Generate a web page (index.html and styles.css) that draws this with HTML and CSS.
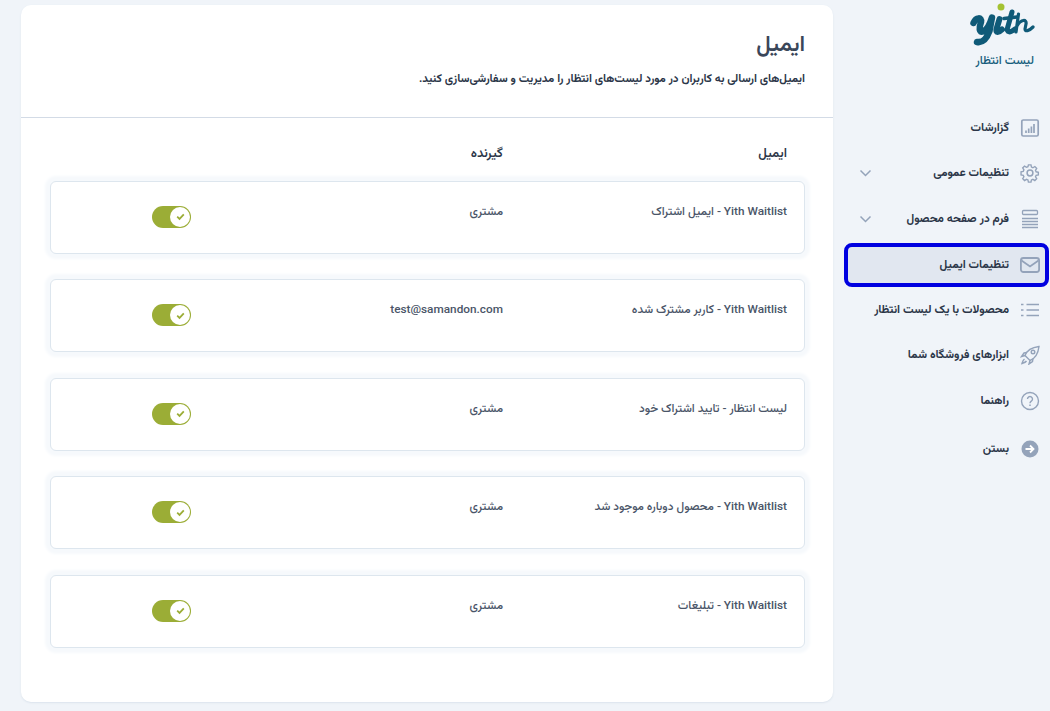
FILE: index.html
```html
<!DOCTYPE html>
<html lang="fa" dir="rtl">
<head>
<meta charset="utf-8">
<title>ایمیل</title>
<link rel="stylesheet" href="styles.css">
</head>
<body>
<div class="page">
  <aside class="sidebar">
    <div class="brand">
      <svg class="logo" viewBox="0 0 75 50" fill="none" stroke="#0f5a78" stroke-linecap="round" stroke-linejoin="round">
        <path stroke-width="6.500" d="M8.500 23C11 17 17 17 16 22 14 28 14 33 18 31.500 22 30 25 24 27 17.500L24.500 31C22 38 18 43 12 42"/>
        <path stroke-width="6" d="M34.500 19L31.500 29C30.500 33 33.500 33 37 29.500"/>
        <path stroke-width="5" d="M47 12L42.500 28C41.500 33 45 33 50 29"/>
        <path stroke-width="3.500" d="M39 18.500L52 17"/>
        <path stroke-width="3.200" d="M53.500 14L51 32M52 26C56 19 62 19 61 24L60 29C60 32 64 31 68 27"/>
        <circle cx="36" cy="7" r="3.500" fill="#a4c232" stroke="none"/>
      </svg>
      <div class="brand-name">لیست انتظار</div>
    </div>
    <nav class="nav">
      <a class="nav-item">
        <svg class="icon" viewBox="0 0 20 20"><rect x="1.800" y="2" width="16.400" height="16" rx="1.500" fill="none" stroke="#94a3ba" stroke-width="1.700"/><path d="M6 15v-2.500M8.700 15v-4.500M11.400 15V8.500M14 15V6" stroke="#94a3ba" stroke-width="1.700" fill="none"/></svg>
        <span class="label">گزارشات</span>
      </a>
      <a class="nav-item">
        <svg class="icon" viewBox="0 0 20 20" fill="none" stroke="#94a3ba" stroke-width="1.500"><circle cx="10" cy="10" r="2.900"/><path d="M8.600 1.500h2.800l.5 2.400 1.600.7 2.100-1.300 2 2-1.300 2.100.7 1.600 2.400.5v2.800l-2.400.5-.7 1.600 1.300 2.100-2 2-2.100-1.300-1.600.7-.5 2.400H8.600l-.5-2.400-1.600-.7-2.100 1.300-2-2 1.300-2.100-.7-1.600-2.400-.5V9l2.400-.5.7-1.600L2.400 4.800l2-2 2.100 1.300 1.600-.7z" transform="translate(.5 .5) scale(.92)"/></svg>
        <span class="label">تنظیمات عمومی</span>
        <svg class="chev" viewBox="0 0 12 8"><path d="M1 1.500l5 5 5-5" fill="none" stroke="#94a3ba" stroke-width="1.500"/></svg>
      </a>
      <a class="nav-item">
        <svg class="icon" viewBox="0 0 20 20" fill="none" stroke="#94a3ba"><rect x="2.500" y="1.500" width="15" height="4" rx="1" stroke-width="1.300"/><path d="M2 9.500h16M2 12.500h16M2 15.500h16M2 18.500h16" stroke-width="1.400"/></svg>
        <span class="label">فرم در صفحه محصول</span>
        <svg class="chev" viewBox="0 0 12 8"><path d="M1 1.500l5 5 5-5" fill="none" stroke="#94a3ba" stroke-width="1.500"/></svg>
      </a>
      <a class="nav-item active">
        <svg class="icon" viewBox="0 0 20 20" fill="none" stroke="#94a3ba" stroke-width="1.800"><rect x=".9" y="3" width="18.200" height="14" rx="2.500"/><path d="M1.500 5.500L10 11.500l8.500-6"/></svg>
        <span class="label">تنظیمات ایمیل</span>
      </a>
      <a class="nav-item">
        <svg class="icon" viewBox="0 0 20 20" fill="none" stroke="#94a3ba" stroke-width="1.600"><path d="M6.500 4.500H19M6.500 10H19M6.500 15.500H19M1 4.500h2.500M1 10h2.500M1 15.500h2.500"/></svg>
        <span class="label">محصولات با یک لیست انتظار</span>
      </a>
      <a class="nav-item">
        <svg class="icon" viewBox="0 0 20 20" fill="none" stroke="#94a3ba" stroke-width="1.400"><path d="M7 12.500l3 3c4-1.500 8-6 9-14-8 1-12.500 5-14 9z"/><circle cx="13" cy="7" r="1.800"/><path d="M5 10.500l-3.500 1 2.500-3.500 3-.5M10 15.500l-1 3.500 3.500-2.500.5-3M4.500 14C3 15 2.500 17 2 18.500c1.500-.5 3.500-1 4.500-2.500"/></svg>
        <span class="label">ابزارهای فروشگاه شما</span>
      </a>
      <a class="nav-item">
        <svg class="icon" viewBox="0 0 20 20" fill="none" stroke="#94a3ba" stroke-width="1.400"><circle cx="10" cy="10" r="8.500"/><path d="M7.500 8a2.500 2.500 0 1 1 3.800 2.100c-.9.6-1.300 1.100-1.300 2.100"/><path d="M10 13.500v1.500" stroke-width="1.500"/></svg>
        <span class="label">راهنما</span>
      </a>
      <a class="nav-item exit">
        <svg class="icon" viewBox="0 0 20 20"><circle cx="10" cy="10" r="8.500" fill="#94a3ba"/><path d="M5.500 10h8M10 6.500l3.500 3.500-3.500 3.500" fill="none" stroke="#fff" stroke-width="1.800"/></svg>
        <span class="label">بستن</span>
      </a>
    </nav>
  </aside>
  <main class="panel">
    <header class="panel-head">
      <h1 class="title">ایمیل</h1>
      <p class="subtitle">ایمیل‌های ارسالی به کاربران در مورد لیست‌های انتظار را مدیریت و سفارشی‌سازی کنید.</p>
    </header>
    <section class="table">
      <div class="row-head">
        <span>ایمیل</span>
        <span>گیرنده</span>
      </div>
      <div class="row"><span class="cell">Yith Waitlist - ایمیل اشتراک</span><span class="cell">مشتری</span><span class="toggle"><span class="knob"><svg viewBox="0 0 10 10"><path d="M2 5.200l2.100 2L8 3" fill="none" stroke="#9bad36" stroke-width="1.600"/></svg></span></span></div>
      <div class="row"><span class="cell">Yith Waitlist - کاربر مشترک شده</span><span class="cell">test@samandon.com</span><span class="toggle"><span class="knob"><svg viewBox="0 0 10 10"><path d="M2 5.200l2.100 2L8 3" fill="none" stroke="#9bad36" stroke-width="1.600"/></svg></span></span></div>
      <div class="row"><span class="cell">لیست انتظار - تایید اشتراک خود</span><span class="cell">مشتری</span><span class="toggle"><span class="knob"><svg viewBox="0 0 10 10"><path d="M2 5.200l2.100 2L8 3" fill="none" stroke="#9bad36" stroke-width="1.600"/></svg></span></span></div>
      <div class="row"><span class="cell">Yith Waitlist - محصول دوباره موجود شد</span><span class="cell">مشتری</span><span class="toggle"><span class="knob"><svg viewBox="0 0 10 10"><path d="M2 5.200l2.100 2L8 3" fill="none" stroke="#9bad36" stroke-width="1.600"/></svg></span></span></div>
      <div class="row"><span class="cell">Yith Waitlist - تبلیغات</span><span class="cell">مشتری</span><span class="toggle"><span class="knob"><svg viewBox="0 0 10 10"><path d="M2 5.200l2.100 2L8 3" fill="none" stroke="#9bad36" stroke-width="1.600"/></svg></span></span></div>
    </section>
  </main>
</div>
</body>
</html>
```
FILE: styles.css
```css
* { box-sizing: border-box; }
html, body { margin: 0; height: 100%; }
body {
  background: #f0f4f9;
  font-family: Roboto, Vazirmatn, "Noto Sans Arabic", "DejaVu Sans", sans-serif;
  color: #2b3648;
  overflow: hidden;
}
.page { display: flex; align-items: flex-start; height: 711px; }

.sidebar { width: 217px; flex: none; padding-right: 1px; }
.brand { height: 105px; padding-right: 9px; display: flex; flex-direction: column; align-items: flex-start; }
.logo { width: 75px; height: 50px; flex: none; }
.brand-name {
  font-size: 12px;
  line-height: 16px;
  font-weight: 500;
  color: #155d7c;
  margin: 2px 6px 0 0;
}

.nav { display: flex; flex-direction: column; }
.nav-item {
  height: 45.500px;
  display: flex;
  align-items: center;
  gap: 11px;
  padding: 0 9px 0 26px;
  font-size: 11.700px;
  font-weight: 700;
  color: #2b3648;
  white-space: nowrap;
}
.nav-item.exit { margin-top: 3px; }
.nav-item.active {
  background: #e1e7f0;
  border: 4px solid #0000e0;
  border-radius: 8px;
  height: 44px;
  width: 205px;
  margin-top: 1.500px;
  padding-right: 5px;
}
.icon { width: 20px; height: 20px; flex: none; }
.chev { width: 13px; height: 8px; margin-right: auto; flex: none; }

.panel {
  width: 812px;
  height: 697px;
  margin-top: 5px;
  background: #fff;
  border-radius: 10px;
  box-shadow: 0 1px 2px #dbe3ec;
}
.panel-head { height: 113px; padding: 25px 28px 0 0; border-bottom: 1px solid #d3dbe6; }
.title { margin: 0; font-size: 22px; line-height: 28px; font-weight: 600; color: #3a4659; }
.subtitle {
  margin: 11px 0 0;
  font-size: 11.500px;
  line-height: 18px;
  font-weight: 700;
  color: #2b3648;
}

.table { padding: 0 28px 0 29px; }
.row-head {
  display: grid;
  grid-template-columns: 284px 1fr;
  padding: 25px 18px 0;
  height: 62.500px;
  font-size: 13px;
  line-height: 20px;
  font-weight: 600;
  color: #2b3648;
}
.row {
  display: grid;
  grid-template-columns: 284px 312px 1fr;
  height: 73px;
  margin-bottom: 25.500px;
  padding: 19px 17px 0;
  background: #fff;
  border: 1px solid #dde6ee;
  border-radius: 6px;
  box-shadow: 0 0 3px 5px #f6f9fc;
  font-size: 11.800px;
  line-height: 20px;
  font-weight: 500;
  color: #4a5568;
}
.toggle {
  width: 39px;
  height: 22px;
  margin-top: 5px;
  border-radius: 11px;
  background: #9bad36;
  display: flex;
  align-items: center;
  padding-right: 1px;
}
.knob {
  width: 20px;
  height: 20px;
  border-radius: 50%;
  background: #fff;
  display: flex;
  align-items: center;
  justify-content: center;
}
.knob svg { width: 11px; height: 11px; }
```
